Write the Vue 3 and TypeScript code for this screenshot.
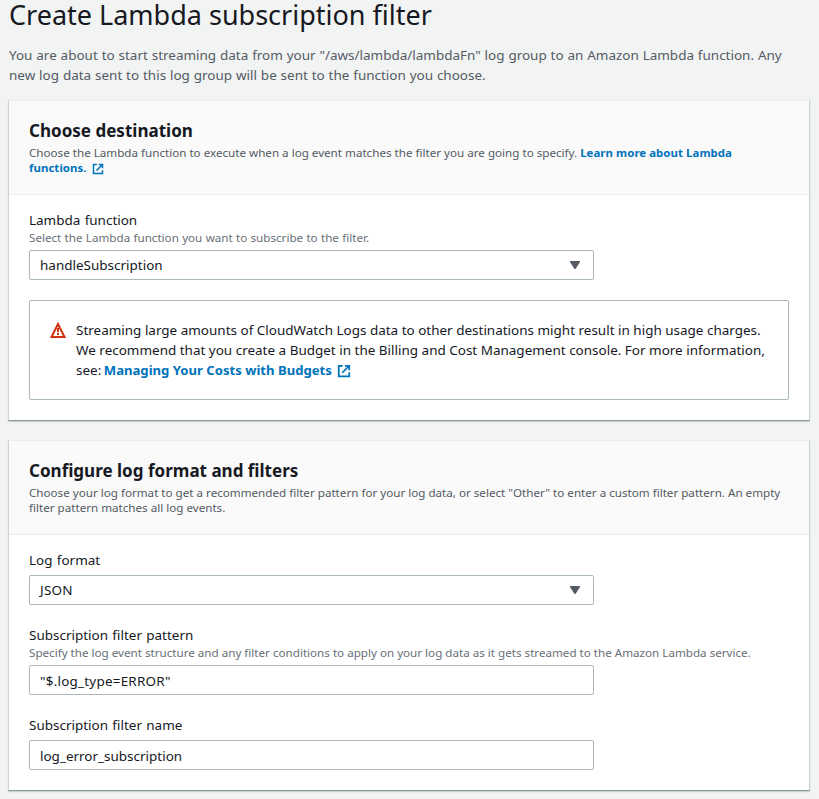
<script setup lang="ts">
import { h, ref } from 'vue'

const lambdaFunction = ref('handleSubscription')
const logFormat = ref('JSON')
const filterPattern = ref('"$.log_type=ERROR"')
const filterName = ref('log_error_subscription')

const ExternalIcon = () =>
  h('svg', { viewBox: '0 0 16 16', fill: 'none', stroke: 'currentColor', 'stroke-width': 2, 'aria-hidden': 'true' }, [
    h('path', { d: 'M6.5 2H2v12h12V9.5' }),
    h('path', { d: 'M9 2h5v5M14 2L6 10' }),
  ])
</script>

<template>
  <main class="page">
    <h1 class="title">Create Lambda subscription filter</h1>
    <p class="intro">
      You are about to start streaming data from your "/aws/lambda/lambdaFn" log group to an Amazon Lambda function. Any<br />
      new log data sent to this log group will be sent to the function you choose.
    </p>

    <section class="card">
      <header class="card-header">
        <h2>Choose destination</h2>
        <p class="description">
          Choose the Lambda function to execute when a log event matches the filter you are going to specify.
          <a class="link">Learn more about Lambda<br />functions. <ExternalIcon class="external" /></a>
        </p>
      </header>
      <div class="card-body">
        <div class="field">
          <label>Lambda function</label>
          <p class="hint short">Select the Lambda function you want to subscribe to the filter.</p>
          <div class="control">
            <span>{{ lambdaFunction }}</span>
            <svg class="caret" viewBox="0 0 10 8"><path d="M0 0h10v1L5.5 8h-1L0 1z" /></svg>
          </div>
        </div>
        <div class="alert">
          <svg class="warning" viewBox="0 0 16 16" fill="none" stroke="currentColor" stroke-width="2">
            <path d="M8 2L1.5 15h13z" />
            <path d="M8 6v4M8 11v2" />
          </svg>
          <p>
            Streaming large amounts of CloudWatch Logs data to other destinations might result in high usage charges.<br />
            We recommend that you create a Budget in the Billing and Cost Management console. For more information,<br />
            see: <a class="link">Managing Your Costs with Budgets <ExternalIcon class="external" /></a>
          </p>
        </div>
      </div>
    </section>

    <section class="card">
      <header class="card-header">
        <h2>Configure log format and filters</h2>
        <p class="description">
          Choose your log format to get a recommended filter pattern for your log data, or select "Other" to enter a custom filter pattern. An empty<br />
          filter pattern matches all log events.
        </p>
      </header>
      <div class="card-body">
        <div class="field">
          <label>Log format</label>
          <div class="control">
            <span class="code">{{ logFormat }}</span>
            <svg class="caret" viewBox="0 0 10 8"><path d="M0 0h10v1L5.5 8h-1L0 1z" /></svg>
          </div>
        </div>
        <div class="field">
          <label>Subscription filter pattern</label>
          <p class="hint">Specify the log event structure and any filter conditions to apply on your log data as it gets streamed to the Amazon Lambda service.</p>
          <div class="control text"><span class="code">{{ filterPattern }}</span></div>
        </div>
        <div class="field">
          <label>Subscription filter name</label>
          <div class="control text"><span>{{ filterName }}</span></div>
        </div>
      </div>
    </section>
  </main>
</template>

<style>
body {
  background: #f2f3f3;
}
</style>

<style scoped>
.page {
  box-sizing: border-box;
  min-height: 799px;
  padding: 0 9px 8px 8px;
  background: #f2f3f3;
  color: #16191f;
  font-family: 'Noto Sans', 'Open Sans', sans-serif;
  font-size: 13.47px;
  line-height: 20px;
  white-space: nowrap;
}
h1,
h2,
p {
  margin: 0;
}
.title {
  padding-left: 1px;
  height: 45px;
  font-size: 27px;
  font-weight: 400;
  line-height: 29px;
}
.intro {
  padding-left: 1px;
  color: #545b64;
  word-spacing: 0.37px;
}
.card {
  box-sizing: border-box;
  margin-top: 15px;
  border: 1px solid #ccd1d1;
  border-top-color: #eaeded;
  border-bottom-color: #879596;
  background: #fff;
  box-shadow: 0 1px 1px rgba(0, 28, 36, 0.15);
}
.card + .card {
  margin-top: 19px;
}
.card-header {
  padding: 18px 20px 19px;
  border-bottom: 1px solid #eaeded;
  background: #fafafa;
}
.card-header h2 {
  font-size: 17.05px;
  font-weight: 700;
  line-height: 24px;
}
.description {
  margin-top: 2px;
  color: #545b64;
  font-size: 11.63px;
  line-height: 15px;
}
.link {
  color: #0073bb;
  font-weight: 700;
}
.description .link {
  font-size: 11.42px;
  letter-spacing: 0.06px;
}
.external {
  display: inline-block;
  width: 14px;
  height: 14px;
  margin-left: 2px;
  vertical-align: -3px;
}
.description .external {
  width: 12px;
  height: 12px;
}
.card-body {
  display: flex;
  flex-direction: column;
  gap: 20px;
  padding: 15px 20px 20px;
}
.field {
  width: 565px;
}
.field label {
  display: block;
  word-spacing: 0.8px;
}
.hint {
  color: #687078;
  font-size: 11.63px;
  line-height: 15px;
}
.hint.short {
  word-spacing: 0.3px;
}
.control {
  box-sizing: border-box;
  display: flex;
  align-items: center;
  justify-content: space-between;
  height: 30px;
  margin-top: 5px;
  padding: 0 13px 0 10px;
  border: 1px solid #aab7b8;
  border-radius: 2px;
  background: #fff;
}
.control.text {
  padding-top: 2px;
}
.code {
  letter-spacing: 0.22px;
}
.caret {
  width: 10px;
  height: 8px;
  fill: #545b64;
}
.alert {
  display: flex;
  gap: 10px;
  box-sizing: border-box;
  height: 100px;
  padding: 19px 20px;
  border: 1px solid #aab7b8;
  border-radius: 2px;
}
.alert .link {
  margin-left: -1px;
  font-size: 13.12px;
}
.warning {
  flex: none;
  width: 16px;
  height: 16px;
  margin-top: 2px;
  color: #d13212;
}
</style>
